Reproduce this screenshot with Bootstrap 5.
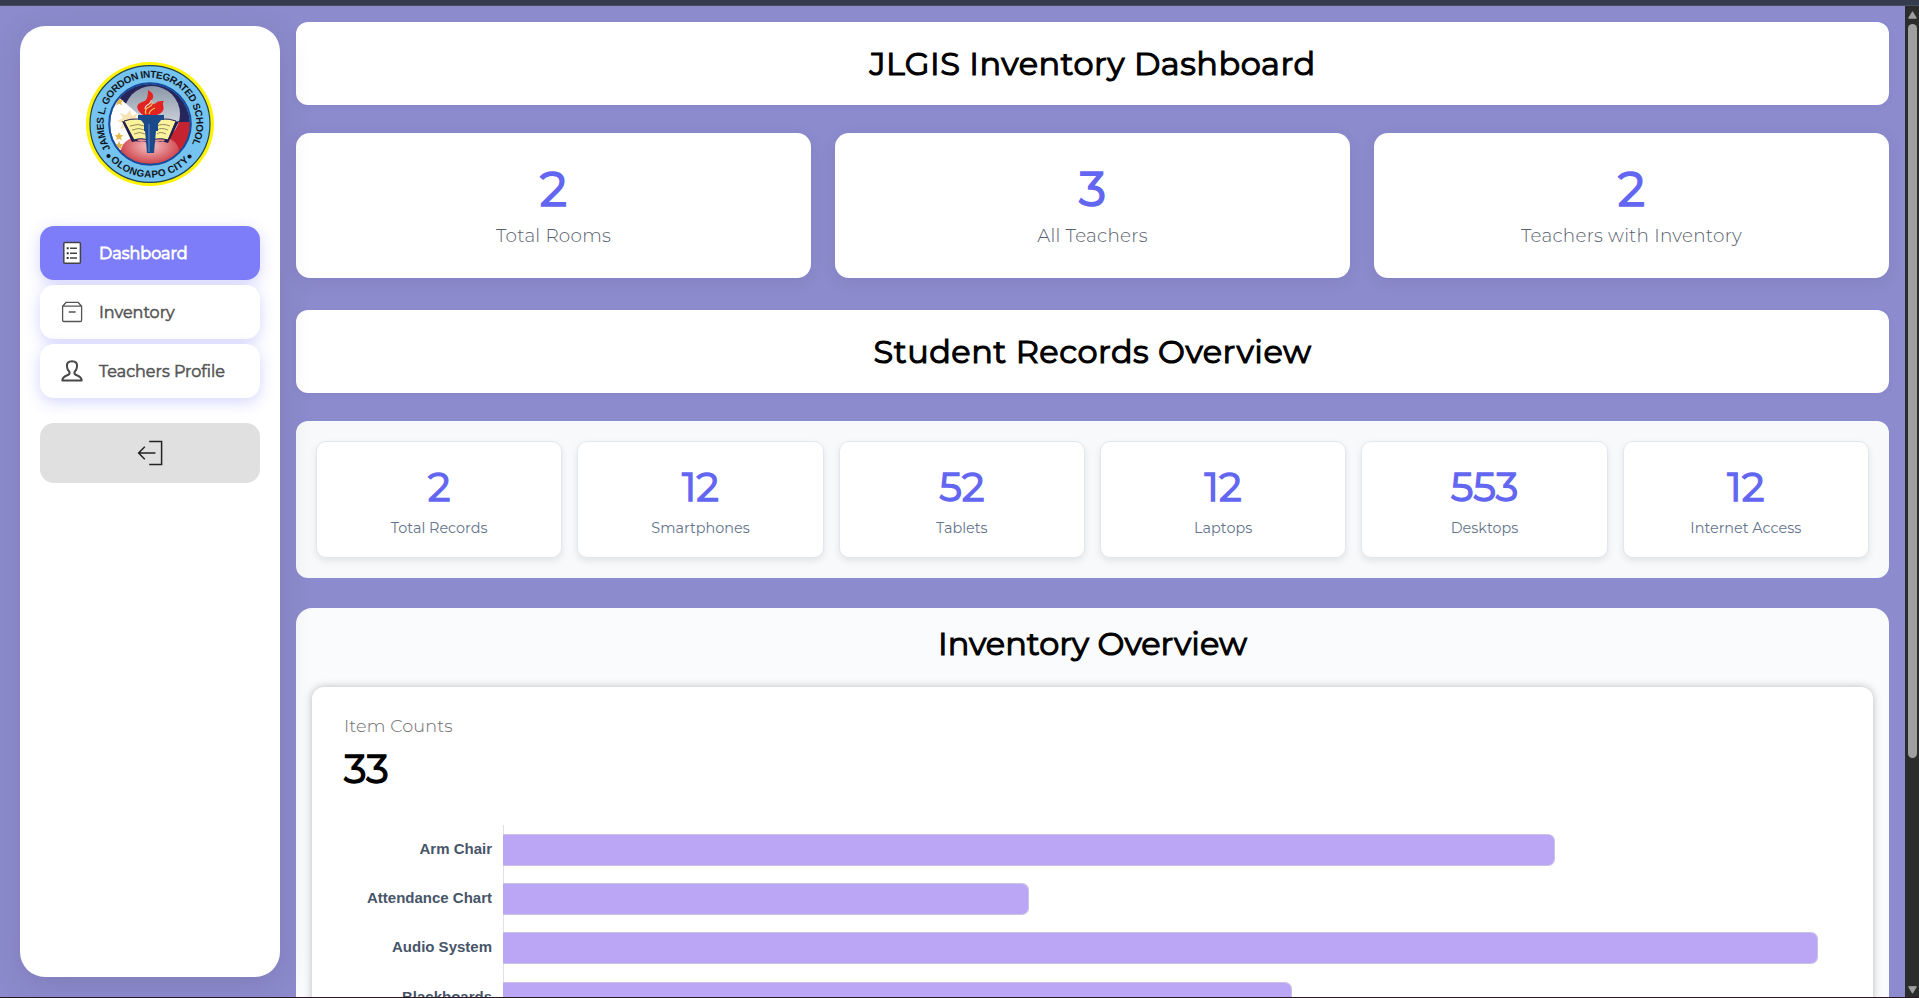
<!DOCTYPE html>
<html lang="en">
<head>
<meta charset="utf-8">
<meta name="viewport" content="width=device-width, initial-scale=1">
<title>JLGIS Inventory Dashboard</title>
<link href="https://cdn.jsdelivr.net/npm/bootstrap@5.3.0/dist/css/bootstrap.min.css" rel="stylesheet">
<style>
  body { font-family: Montserrat, "Open Sans", sans-serif; background: #8b8bce; color: #000; height: 998px; }
  .top-strip { height: 6px; background: #343c4d; border-bottom: 1px solid #4b4c5e; }
  .bottom-strip { height: 1px; background: #2a1520; }

  .side { width: 260px; margin: 20px 16px 20px 20px; padding: 35px 20px 0; border-radius: 25px; background: #fff; box-shadow: 0 8px 32px rgba(85, 60, 80, .18); }
  .logo { width: 130px; height: 126px; margin: 0 auto 39px; }
  .menu { gap: 5px; }
  .menu a { height: 54px; padding-left: 20px; gap: 15px; border-radius: 14px; font-size: 16px; color: #555; background: #fff; box-shadow: 0 4px 15px rgba(125, 125, 250, .32); -webkit-text-stroke: .55px currentColor; }
  .menu a.active { background: #7d7df9; color: #fff; -webkit-text-stroke-width: .8px; }
  .menu svg { width: 24px; height: 24px; }
  .menu span { padding-top: 2px; }
  .logout { height: 60px; margin-top: 25px; border-radius: 14px; background: #e0e0e0; }

  .content { margin: 16px 16px 0 0; }
  .tile-head { height: 83px; border-radius: 12px; background: #fff; box-shadow: 0 2px 8px rgba(0, 0, 0, .03); }
  .title { font-size: 32px; line-height: 40px; font-weight: 400; margin: 0; -webkit-text-stroke: 1.1px #000; }
  .tile-head .title { letter-spacing: .5px; }
  .stat { height: 145px; border-radius: 14px; background: #fff; box-shadow: 0 4px 15px rgba(80, 50, 70, .1); padding-top: 27px; }
  .stat-number { font-size: 48px; line-height: 58px; color: #6366f1; -webkit-text-stroke: 1.6px #6366f1; }
  .stat-label { font-size: 18.4px; line-height: 26px; margin-top: 5px; font-weight: 300; letter-spacing: .25px; color: #56606c; }
  .records { padding: 20px; gap: 15px; border-radius: 12px; background: #f8f9fb; }
  .record { height: 117px; border: 1px solid #e2e6ee; border-radius: 10px; background: #fff; box-shadow: 0 3px 7px rgba(0, 0, 0, .09); padding-top: 21px; }
  .record-number { font-size: 40px; line-height: 48px; color: #6366f1; -webkit-text-stroke: 1.4px #6366f1; }
  .record-label { font-size: 14.4px; line-height: 22px; margin-top: 6px; color: #64748b; }

  .overview { padding: 16px 16px 0; border-radius: 16px 16px 0 0; background: #fafbfd; height: 389px; }
  .chart-card { height: 700px; margin-top: 23px; border-radius: 12px; background: #fff; box-shadow: 0 0 8px rgba(0, 0, 0, .26); padding: 27px 32px 0; }
  .count-label { font-size: 17.6px; line-height: 24px; font-weight: 300; letter-spacing: .12px; color: #6c6c6c; }
  .count-number { font-size: 40px; line-height: 48px; margin-top: 7px; -webkit-text-stroke: 1.4px #000; }
  .plot { margin-top: 32px; }
  .bar-label { width: 148px; font: bold 15px/32px "Liberation Sans", sans-serif; color: #475569; margin-top: -2px; }
  .plot-row { height: 49.4px; gap: 11px; }
  .lane { border-left: 1px solid #e0e0e5; }
  .bar-fill { height: 32px; margin-left: -1px; background: #bba6f6; border: 1px solid #c9c3e6; border-left: 0; border-radius: 0 7px 7px 0; }

  .scroller { width: 14px; background: #2c2c2c; padding: 5px 0 3px; }
  .scroll-thumb { width: 9px; height: 734px; border-radius: 5px; background: #9f9f9f; margin-top: 5px; }
</style>
</head>
<body class="d-flex flex-column overflow-hidden">
<div class="top-strip flex-shrink-0"></div>
<div class="d-flex flex-grow-1 overflow-hidden">
  <nav class="side d-flex flex-column flex-shrink-0 position-relative">
    <svg class="logo flex-shrink-0" viewBox="-65 -63 130 126">
      <defs>
        <clipPath id="disc"><circle r="40"/></clipPath>
        <linearGradient id="sky" x1="0" y1="0" x2="0" y2="1"><stop offset="0" stop-color="#8b98a8"/><stop offset="1" stop-color="#e9edf2"/></linearGradient>
        <radialGradient id="rose" cx=".5" cy=".35" r=".6"><stop offset="0" stop-color="#f6c4c6"/><stop offset="1" stop-color="#c9343c"/></radialGradient>
        <path id="arcTop" d="M-39.4 24.6A46.4 46.4 0 1 1 39.4 24.6"/>
        <path id="arcBottom" d="M-39.5 36.2A53.6 53.6 0 0 0 39.5 36.2"/>
      </defs>
      <ellipse rx="64" ry="62" fill="#fff200"/>
      <ellipse rx="60" ry="58.4" fill="#75c3f0" stroke="#1d4458" stroke-width="1.2"/>
      <g clip-path="url(#disc)">
        <rect x="-41" y="-41" width="82" height="82" fill="#27265c"/>
        <path d="M-6-2H42V42H-42V30z" fill="#c4232f"/>
        <circle cx="2" cy="-10" r="28" fill="url(#sky)"/>
        <path d="M-42-36L4 4L-42 34z" fill="#fdfdfd"/>
        <ellipse cx="0" cy="27" rx="29" ry="17" fill="url(#rose)"/>
        <path d="M-20-14l2 6 6-3-3 6 6 2-6 3 2 6-6-3-3 6-2-6-6 2 3-6-6-2 6-3-3-5 6 2z" fill="#f7e3b4"/>
        <path d="M-31-27l1.5 3 3 .3-2.3 2 .7 3-3-1.5-2.7 1.5.7-3-2.2-2 3-.3zM-31 8l1.3 3 3 .3-2.2 2 .6 3-2.7-1.5-2.7 1.5.6-3-2.2-2 3-.3zM-31 17l1.3 3 3 .3-2.2 2 .6 3-2.7-1.5-2.7 1.5.6-3-2.2-2 3-.3z" fill="#e5b84b"/>
      </g>
      <circle r="40.8" fill="none" stroke="#164a9c" stroke-width="2"/>
      <path d="M-28-3L-18 18Q-8 15 0 20Q9 15 18 19L29-3L20-1L14 18L-12 17L-20-1z" fill="#1d1c4d"/>
      <path d="M-26-3Q-12-8 0-1Q12-8 26-3L18 16Q8 13 0 17Q-8 13-16 16z" fill="#fbf29b" stroke="#22204e" stroke-width="1"/>
      <path d="M-20 2Q-12-1-5 2M-18 6Q-11 3-5 6M-16 10Q-10 7-5 10M20 2Q12-1 7 2M18 6Q11 3 7 6M16 10Q10 7 7 10" fill="none" stroke="#4c4738" stroke-width=".6"/>
      <path d="M-12-9H14V-4H11L8 0V7H6L4 29H-3L-5 7H-6V0L-9-4H-12z" fill="#1b4a8c"/>
      <path d="M-1 0V28" stroke="#5e8fc5" stroke-width="1"/>
      <path d="M-7-9C-15-15-14-20-8-22C-4-23-2-25-2-34C4-31 4-27 2-24C1-20 4-19 6-21C8-23 10-23 14-23C11-20 16-16 12-12Q10-10 7-9z" fill="#e32322"/>
      <path d="M-4-10Q-6-15-1-17Q3-19 2-22M-1-10Q0-14 5-16" fill="none" stroke="#f9d64a" stroke-width="1.2"/>
      <path d="M-5-15Q-5-18-1-20Q2-22 1-24" fill="none" stroke="#d9e5ee" stroke-width="1.1"/>
      <g font-family="Liberation Sans, sans-serif" font-weight="700" font-size="10" fill="#10161c">
        <text textLength="192" lengthAdjust="spacing"><textPath href="#arcTop">JAMES L. GORDON INTEGRATED SCHOOL</textPath></text>
        <text textLength="88" lengthAdjust="spacing"><textPath href="#arcBottom">OLONGAPO CITY</textPath></text>
      </g>
      <circle cx="-41.5" cy="32" r="2.1" fill="#10161c"/><circle cx="39.5" cy="32.5" r="2.1" fill="#10161c"/>
    </svg>
    <div class="menu nav flex-column flex-nowrap">
      <a class="active d-flex align-items-center text-decoration-none" href="#">
        <svg viewBox="0 0 24 24"><rect x="3.8" y="1.6" width="16.6" height="20.6" rx="1" fill="#fff" stroke="#444" stroke-width="1.5"/><path d="M10 7.2H17M10 12.2H17M10 17H17" stroke="#444" stroke-width="1.4"/><path d="M6.7 7.2h2M6.7 12.2h2M6.7 17h2" stroke="#333" stroke-width="2"/></svg>
        <span>Dashboard</span></a>
      <a class="d-flex align-items-center text-decoration-none" href="#">
        <svg viewBox="0 0 24 24" fill="none" stroke="#555" stroke-width="1.3" stroke-linejoin="round"><path d="M2.6 6.2L6.2 2.3H18L21.6 6.2V20.3Q21.6 21.5 20.4 21.5H3.8Q2.6 21.5 2.6 20.3zM2.6 6.2H21.6M8.7 12H15.6"/></svg>
        <span>Inventory</span></a>
      <a class="d-flex align-items-center text-decoration-none" href="#">
        <svg viewBox="0 0 24 24" fill="none" stroke="#484848" stroke-width="2" stroke-linejoin="round"><path d="M12 2.2C8.2 2.2 6.8 4.2 6.9 7C7 9.8 7.8 11.2 9.4 12.8C9.8 14 9.4 15.4 7.8 16C5 17 2.3 18 2.3 21.4H21.7C21.7 18 19 17 16.2 16C14.6 15.4 14.2 14 14.6 12.8C16.2 11.2 17 9.8 17.1 7C17.2 4.2 15.8 2.2 12 2.2z"/></svg>
        <span>Teachers Profile</span></a>
    </div>
    <a class="logout d-flex align-items-center justify-content-center" href="#">
      <svg width="26" height="26" viewBox="0 0 26 26" fill="none" stroke="#222" stroke-width="1.5"><path d="M12.2 1.4H24.6V24.4H12.2"/><path d="M18.4 13H1.6M7.8 6.8L1.6 13L7.8 19.2"/></svg>
    </a>
  </nav>

  <main class="content flex-grow-1 d-flex flex-column">
    <header class="tile-head d-flex align-items-center justify-content-center flex-shrink-0"><h1 class="title">JLGIS Inventory Dashboard</h1></header>
    <section class="row gx-4 flex-shrink-0 text-center" style="margin-top:28px">
      <div class="col"><div class="stat"><div class="stat-number">2</div><div class="stat-label">Total Rooms</div></div></div>
      <div class="col"><div class="stat"><div class="stat-number">3</div><div class="stat-label">All Teachers</div></div></div>
      <div class="col"><div class="stat"><div class="stat-number">2</div><div class="stat-label">Teachers with Inventory</div></div></div>
    </section>
    <header class="tile-head d-flex align-items-center justify-content-center flex-shrink-0" style="margin-top:32px"><h2 class="title">Student Records Overview</h2></header>
    <section class="records d-flex flex-shrink-0 text-center" style="margin-top:28px">
      <div class="record flex-fill w-100"><div class="record-number">2</div><div class="record-label">Total Records</div></div>
      <div class="record flex-fill w-100"><div class="record-number">12</div><div class="record-label">Smartphones</div></div>
      <div class="record flex-fill w-100"><div class="record-number">52</div><div class="record-label">Tablets</div></div>
      <div class="record flex-fill w-100"><div class="record-number">12</div><div class="record-label">Laptops</div></div>
      <div class="record flex-fill w-100"><div class="record-number">553</div><div class="record-label">Desktops</div></div>
      <div class="record flex-fill w-100"><div class="record-number">12</div><div class="record-label">Internet Access</div></div>
    </section>
    <section class="overview flex-shrink-0 overflow-hidden" style="margin-top:30px">
      <h2 class="title text-center">Inventory Overview</h2>
      <div class="chart-card">
        <div class="count-label">Item Counts</div>
        <div class="count-number">33</div>
        <div class="plot">
          <div class="plot-row d-flex"><div class="bar-label text-end align-self-center">Arm Chair</div><div class="lane flex-grow-1 d-flex align-items-center"><div class="bar-fill" style="width:calc(4 * 263px)"></div></div></div>
          <div class="plot-row d-flex"><div class="bar-label text-end align-self-center">Attendance Chart</div><div class="lane flex-grow-1 d-flex align-items-center"><div class="bar-fill" style="width:calc(2 * 263px)"></div></div></div>
          <div class="plot-row d-flex"><div class="bar-label text-end align-self-center">Audio System</div><div class="lane flex-grow-1 d-flex align-items-center"><div class="bar-fill" style="width:calc(5 * 263px)"></div></div></div>
          <div class="plot-row d-flex"><div class="bar-label text-end align-self-center">Blackboards</div><div class="lane flex-grow-1 d-flex align-items-center"><div class="bar-fill" style="width:calc(3 * 263px)"></div></div></div>
        </div>
      </div>
    </section>
  </main>

  <aside class="scroller d-flex flex-column align-items-center flex-shrink-0">
    <svg width="9" height="8" viewBox="0 0 9 8"><path d="M4.5.7L8.4 7.2H.6z" fill="#9f9f9f" stroke="#9f9f9f" stroke-linejoin="round"/></svg>
    <div class="scroll-thumb flex-shrink-0"></div>
    <svg class="mt-auto" width="9" height="8" viewBox="0 0 9 8"><path d="M4.5 7.2L8.4.7H.6z" fill="#9f9f9f" stroke="#9f9f9f" stroke-linejoin="round"/></svg>
  </aside>
</div>
<div class="bottom-strip flex-shrink-0"></div>
<script src="https://cdn.jsdelivr.net/npm/bootstrap@5.3.0/dist/js/bootstrap.bundle.min.js"></script>
</body>
</html>
